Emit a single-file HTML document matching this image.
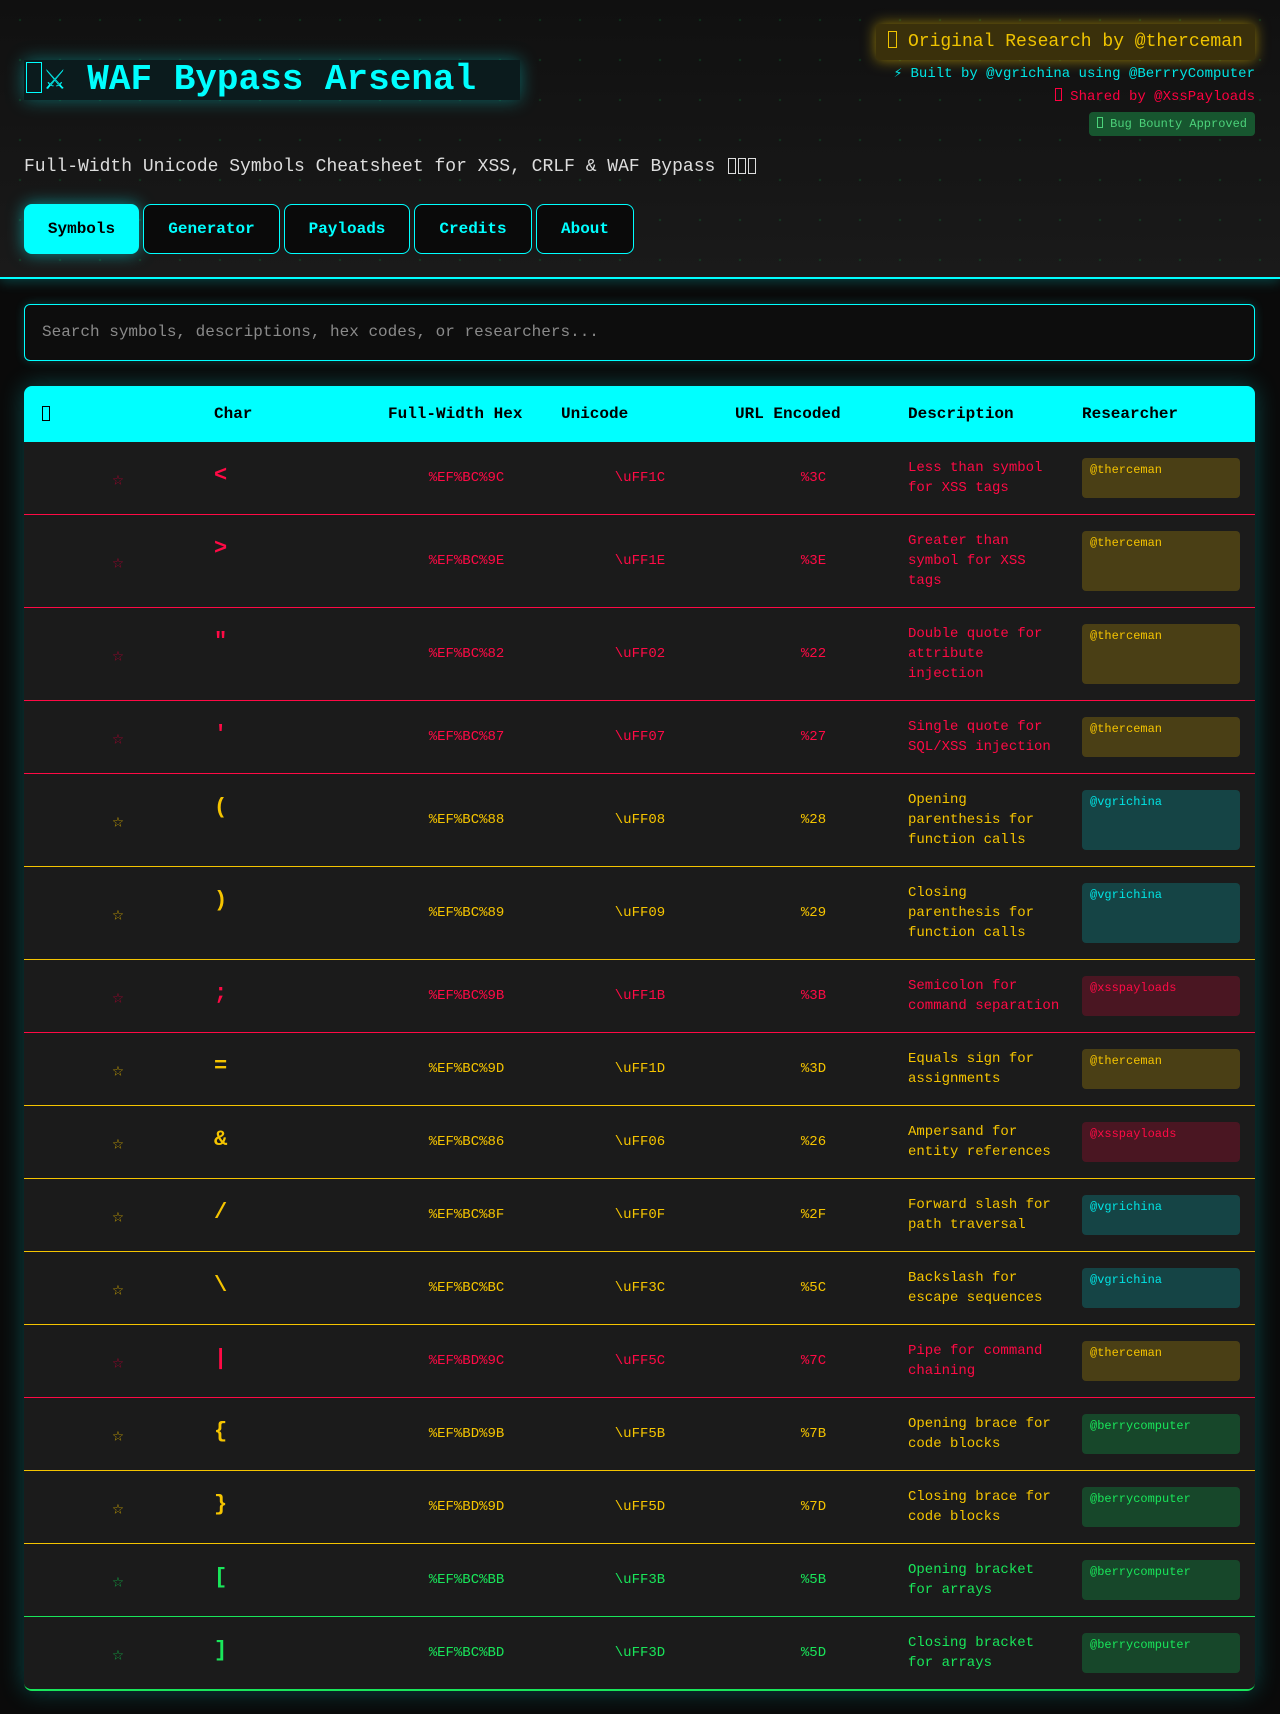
<!DOCTYPE html>
<html><head><meta charset="utf-8">
<style>
*{box-sizing:border-box;margin:0;padding:0}
html,body{width:1280px;height:1714px;background:#0a0a0a;overflow:hidden}
body{font-family:"Liberation Mono","DejaVu Sans Mono",monospace;color:#ddd;position:relative}
.hdr{position:absolute;left:0;top:0;width:1280px;height:279px;
 background-color:#141414;
 background-image:radial-gradient(circle,rgba(0,255,100,0.12) 1px,transparent 1.4px),linear-gradient(180deg,#101010,#1a1a1a);
 background-size:40px 40px,100% 100%;
 border-bottom:2px solid #00ffff;box-shadow:0 2px 12px rgba(0,255,255,.25)}
.tofu{display:inline-block;border:1.5px solid currentColor;vertical-align:middle}
.title{position:absolute;left:24px;top:60px;width:496px;height:40px;background:#0b1b1d;
 box-shadow:0 0 18px rgba(0,255,255,.35);color:#00ffff;font-size:36px;font-weight:bold;line-height:40px;white-space:nowrap}
.title .tofu{width:16px;height:31px;margin:-4px 2px 0 2px}
.sub{position:absolute;left:24px;top:157px;font-size:18px;color:#ddd;white-space:nowrap}
.sub .tofu{width:8px;height:16px;border-width:1px;margin-left:2px}
.nav{position:absolute;top:204px;left:24px;display:flex;gap:4px}
.nav div{height:50px;line-height:48px;border:1px solid #00ffff;border-radius:8px;background:#0a0a0a;color:#00ffff;font-size:16px;font-weight:bold;text-align:center}
.nav .on{background:#00ffff;color:#000;box-shadow:0 0 16px rgba(0,255,255,.5)}
.orig{position:absolute;left:876px;top:24px;width:379px;height:36px;background:#3a300b;border-radius:4px;
 box-shadow:0 0 14px rgba(255,210,0,.55);color:#f0c400;font-size:18px;line-height:36px;text-align:center;white-space:nowrap}
.orig .tofu{width:9px;height:17px;border-width:1px;margin-top:-3px}
.built{position:absolute;right:25px;top:65px;font-size:14px;color:#00e5e5;white-space:nowrap}
.shared{position:absolute;right:25px;top:89px;font-size:14px;color:#ff0040;white-space:nowrap}
.shared .tofu{width:7px;height:13px;border-width:1px;margin-top:-3px}
.bb{position:absolute;left:1089px;top:112px;width:166px;height:24px;background:#17562f;border-radius:4px;color:#4cd27a;font-size:12px;line-height:24px;text-align:center;white-space:nowrap}
.bb .tofu{width:6px;height:11px;border-width:1px;margin-top:-2px}
.search{position:absolute;left:24px;top:304px;width:1231px;height:57px;border:1px solid #00ffff;border-radius:6px;background:#0d0d0d;
 color:#8a8a8a;font-size:16px;line-height:55px;padding-left:17px;box-shadow:0 0 10px rgba(0,255,255,.2)}
.tw{position:absolute;left:24px;top:386px;width:1231px;border-radius:8px;overflow:hidden;box-shadow:0 0 24px rgba(0,255,255,.25);border-bottom:2px solid #19e65a}
table{border-collapse:collapse;table-layout:fixed;width:1231px;background:#1b1b1b}
th{background:#00ffff;color:#000;height:56px;font-size:16px;font-weight:bold;text-align:left;padding-left:18px}
th .tofu{width:8px;height:15px;border-width:1px}
td{padding:16px 0 16px 18px;font-size:14px;vertical-align:middle;line-height:20px}
td.s{text-align:center;padding-left:16px}
td.c{vertical-align:top;font-size:22px;font-weight:bold;line-height:32px;padding-top:18px}
td.m{text-align:center;padding-left:20px}
td.d{padding-right:2px}
td.r{vertical-align:top}
.b{width:158px;border-radius:4px;font-size:12px;line-height:16px;padding:4px 8px}
tr.R td{color:#ff0a45;border-bottom:1px solid #ff0a45}
tr.Y td{color:#f5c400;border-bottom:1px solid #f5c400}
tr.G td{color:#19e65a;border-bottom:1px solid #19e65a}
tr.G:last-child td{border-bottom:none}
tr td.s{font-size:19px;padding-top:20px}
tr.R td.s{color:#a8002e}
tr.Y td.s{color:#c9a100}
tr.G td.s{color:#12a842}
.t{background:#4a3f15;color:#f5c400}
.v{background:#154445;color:#00e5e5}
.x{background:#4a1622;color:#ff0a45}
.g{background:#17472a;color:#19e65a}
</style></head><body>
<div class="hdr">
 <div class="title"><span class="tofu"></span>⚔ WAF Bypass Arsenal</div>
 <div class="sub">Full-Width Unicode Symbols Cheatsheet for XSS, CRLF &amp; WAF Bypass <span class="tofu"></span><span class="tofu"></span><span class="tofu"></span></div>
 <div class="nav">
  <div class="on" style="width:115px">Symbols</div>
  <div style="width:137px">Generator</div>
  <div style="width:126px">Payloads</div>
  <div style="width:118px">Credits</div>
  <div style="width:98px">About</div>
 </div>
 <div class="orig"><span class="tofu"></span> Original Research by @therceman</div>
 <div class="built">⚡ Built by @vgrichina using @BerrryComputer</div>
 <div class="shared"><span class="tofu"></span> Shared by @XssPayloads</div>
 <div class="bb"><span class="tofu"></span> Bug Bounty Approved</div>
</div>
<div class="search">Search symbols, descriptions, hex codes, or researchers...</div>
<div class="tw"><table>
<colgroup><col style="width:172px"><col style="width:174px"><col style="width:173px"><col style="width:174px"><col style="width:173px"><col style="width:174px"><col style="width:191px"></colgroup>
<tr><th><span class="tofu"></span></th><th>Char</th><th>Full-Width Hex</th><th>Unicode</th><th>URL Encoded</th><th>Description</th><th>Researcher</th></tr>
<tr class="R"><td class="s">☆</td><td class="c">&lt;</td><td class="m">%EF%BC%9C</td><td class="m">\uFF1C</td><td class="m">%3C</td><td class="d">Less than symbol for XSS tags</td><td class="r"><div class="b t" style="height:40px">@therceman</div></td></tr>
<tr class="R"><td class="s">☆</td><td class="c">&gt;</td><td class="m">%EF%BC%9E</td><td class="m">\uFF1E</td><td class="m">%3E</td><td class="d">Greater than symbol for XSS tags</td><td class="r"><div class="b t" style="height:60px">@therceman</div></td></tr>
<tr class="R"><td class="s">☆</td><td class="c">"</td><td class="m">%EF%BC%82</td><td class="m">\uFF02</td><td class="m">%22</td><td class="d">Double quote for attribute injection</td><td class="r"><div class="b t" style="height:60px">@therceman</div></td></tr>
<tr class="R"><td class="s">☆</td><td class="c">'</td><td class="m">%EF%BC%87</td><td class="m">\uFF07</td><td class="m">%27</td><td class="d">Single quote for SQL/XSS injection</td><td class="r"><div class="b t" style="height:40px">@therceman</div></td></tr>
<tr class="Y"><td class="s">☆</td><td class="c">(</td><td class="m">%EF%BC%88</td><td class="m">\uFF08</td><td class="m">%28</td><td class="d">Opening parenthesis for function calls</td><td class="r"><div class="b v" style="height:60px">@vgrichina</div></td></tr>
<tr class="Y"><td class="s">☆</td><td class="c">)</td><td class="m">%EF%BC%89</td><td class="m">\uFF09</td><td class="m">%29</td><td class="d">Closing parenthesis for function calls</td><td class="r"><div class="b v" style="height:60px">@vgrichina</div></td></tr>
<tr class="R"><td class="s">☆</td><td class="c">;</td><td class="m">%EF%BC%9B</td><td class="m">\uFF1B</td><td class="m">%3B</td><td class="d">Semicolon for command separation</td><td class="r"><div class="b x" style="height:40px">@xsspayloads</div></td></tr>
<tr class="Y"><td class="s">☆</td><td class="c">=</td><td class="m">%EF%BC%9D</td><td class="m">\uFF1D</td><td class="m">%3D</td><td class="d">Equals sign for assignments</td><td class="r"><div class="b t" style="height:40px">@therceman</div></td></tr>
<tr class="Y"><td class="s">☆</td><td class="c">&amp;</td><td class="m">%EF%BC%86</td><td class="m">\uFF06</td><td class="m">%26</td><td class="d">Ampersand for entity references</td><td class="r"><div class="b x" style="height:40px">@xsspayloads</div></td></tr>
<tr class="Y"><td class="s">☆</td><td class="c">/</td><td class="m">%EF%BC%8F</td><td class="m">\uFF0F</td><td class="m">%2F</td><td class="d">Forward slash for path traversal</td><td class="r"><div class="b v" style="height:40px">@vgrichina</div></td></tr>
<tr class="Y"><td class="s">☆</td><td class="c">\</td><td class="m">%EF%BC%BC</td><td class="m">\uFF3C</td><td class="m">%5C</td><td class="d">Backslash for escape sequences</td><td class="r"><div class="b v" style="height:40px">@vgrichina</div></td></tr>
<tr class="R"><td class="s">☆</td><td class="c">|</td><td class="m">%EF%BD%9C</td><td class="m">\uFF5C</td><td class="m">%7C</td><td class="d">Pipe for command chaining</td><td class="r"><div class="b t" style="height:40px">@therceman</div></td></tr>
<tr class="Y"><td class="s">☆</td><td class="c">{</td><td class="m">%EF%BD%9B</td><td class="m">\uFF5B</td><td class="m">%7B</td><td class="d">Opening brace for code blocks</td><td class="r"><div class="b g" style="height:40px">@berrycomputer</div></td></tr>
<tr class="Y"><td class="s">☆</td><td class="c">}</td><td class="m">%EF%BD%9D</td><td class="m">\uFF5D</td><td class="m">%7D</td><td class="d">Closing brace for code blocks</td><td class="r"><div class="b g" style="height:40px">@berrycomputer</div></td></tr>
<tr class="G"><td class="s">☆</td><td class="c">[</td><td class="m">%EF%BC%BB</td><td class="m">\uFF3B</td><td class="m">%5B</td><td class="d">Opening bracket for arrays</td><td class="r"><div class="b g" style="height:40px">@berrycomputer</div></td></tr>
<tr class="G"><td class="s">☆</td><td class="c">]</td><td class="m">%EF%BC%BD</td><td class="m">\uFF3D</td><td class="m">%5D</td><td class="d">Closing bracket for arrays</td><td class="r"><div class="b g" style="height:40px">@berrycomputer</div></td></tr>
</table></div>
</body></html>
